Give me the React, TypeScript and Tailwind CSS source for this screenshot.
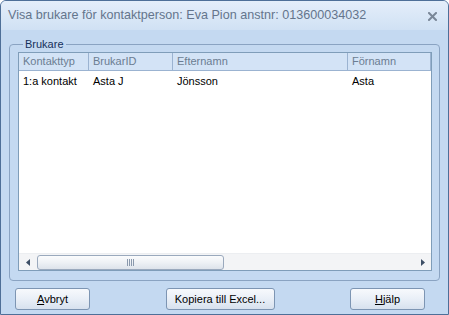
import React from "react"

const COLUMNS = [
    { label: "Kontakttyp", width: "w-[70px]" },
    { label: "BrukarID", width: "w-[84px]" },
    { label: "Efternamn", width: "w-[175px]" },
    { label: "Förnamn", width: "flex-1" },
]

const ROWS = [["1:a kontakt", "Asta J", "Jönsson", "Asta"]]

function DlgButton({ children, className }: { children: React.ReactNode; className: string }) {
    return (
        <button
            className={`h-[22px] rounded-[3px] border border-[#7d95b3] bg-gradient-to-b from-[#f7f9fc] via-[#e9eff7] to-[#d7e1ee] text-[11px] text-black ${className}`}
        >
            {children}
        </button>
    )
}

export default function App() {
    return (
        <div
            className="w-[449px] h-[315px] flex flex-col rounded-t-[6px] border border-[#4e6f98] bg-[#c4d9f1] overflow-hidden"
            style={{ fontFamily: '"Liberation Sans", Arial, sans-serif' }}
        >
            {/* title bar */}
            <div className="h-[29px] shrink-0 flex items-center justify-between pl-[7px] pr-[11px] bg-gradient-to-b from-[#e4eefa] to-[#d0e1f4]">
                <span className="text-[12.6px] text-[#64758c]">
                    Visa brukare för kontaktperson: Eva Pion anstnr: 013600034032
                </span>
                <svg width="9" height="9" viewBox="0 0 9 9" className="mt-[1px]">
                    <path d="M1 1 L8 8 M8 1 L1 8" stroke="#7a8798" strokeWidth="2" strokeLinecap="square" />
                </svg>
            </div>

            <div className="flex-1 flex flex-col px-[8px] pt-[8px] pb-[4px]">
                <fieldset className="flex-1 flex flex-col border border-[#8aa3c2] rounded-[4px] pl-[8px] pr-[7px] pt-[1px] pb-[9px] min-h-0">
                    <legend className="ml-[5px] px-[2px] text-[11px] leading-[13px] text-[#15305a]">Brukare</legend>

                    <div className="flex-1 flex flex-col border border-[#7f9db9] bg-white min-h-0">
                        {/* header */}
                        <div className="h-[18px] flex border-b border-[#9bb3d1] bg-[#d3e3f6]">
                            {COLUMNS.map(col => (
                                <div
                                    key={col.label}
                                    className={`${col.width} shrink-0 flex items-center pl-[4px] border-r border-[#9bb3d1] text-[11px] text-[#6b7d92]`}
                                >
                                    {col.label}
                                </div>
                            ))}
                        </div>

                        {/* rows */}
                        <div className="flex-1 pt-[1px]">
                            {ROWS.map((row, i) => (
                                <div key={i} className="h-[19px] flex items-center">
                                    {row.map((cell, j) => (
                                        <div
                                            key={j}
                                            className={`${COLUMNS[j].width} shrink-0 pl-[4px] text-[11px] text-black`}
                                        >
                                            {cell}
                                        </div>
                                    ))}
                                </div>
                            ))}
                        </div>

                        {/* horizontal scrollbar */}
                        <div className="h-[17px] flex items-center bg-[#f3f4f6] border-t border-[#eceef1]">
                            <div className="w-[17px] flex items-center justify-center">
                                <svg width="4" height="7" viewBox="0 0 4 7">
                                    <path d="M4 0 L0 3.5 L4 7 Z" fill="#3c4e66" />
                                </svg>
                            </div>
                            <div className="flex-1 h-full flex items-center">
                                <div className="w-[187px] h-[15px] ml-[1px] rounded-[3px] border border-[#9aa9bd] bg-gradient-to-b from-[#fbfcfd] via-[#eef1f5] to-[#dde3eb] flex items-center justify-center">
                                    <svg width="8" height="7" viewBox="0 0 8 7">
                                        <path d="M0.5 0 V7 M2.5 0 V7 M4.5 0 V7 M6.5 0 V7" stroke="#8a99ad" strokeWidth="1" />
                                    </svg>
                                </div>
                            </div>
                            <div className="w-[17px] flex items-center justify-center">
                                <svg width="4" height="7" viewBox="0 0 4 7">
                                    <path d="M0 0 L4 3.5 L0 7 Z" fill="#3c4e66" />
                                </svg>
                            </div>
                        </div>
                    </div>
                </fieldset>

                {/* buttons */}
                <div className="h-[22px] mt-[7px] flex items-center justify-between pl-[6px] pr-[15px]">
                    <DlgButton className="w-[75px]">
                        <span className="underline underline-offset-[1px]">A</span>vbryt
                    </DlgButton>
                    <DlgButton className="w-[109px]">Kopiera till Excel...</DlgButton>
                    <DlgButton className="w-[75px]">
                        <span className="underline underline-offset-[1px]">H</span>jälp
                    </DlgButton>
                </div>
            </div>
        </div>
    )
}
